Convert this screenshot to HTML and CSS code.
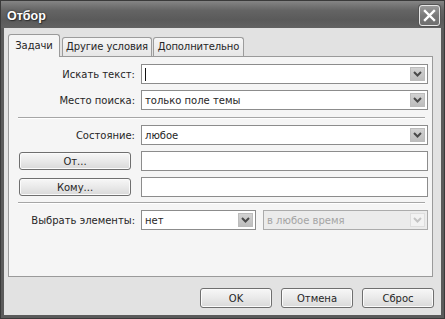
FILE: index.html
```html
<!DOCTYPE html>
<html lang="ru">
<head>
<meta charset="utf-8">
<title>Отбор</title>
<link rel="stylesheet" href="styles.css">
</head>
<body>
<div class="window">
  <div class="titlebar">
    <span class="title">Отбор</span>
    <span class="close"><svg width="13" height="13" viewBox="0 0 13 13"><path d="M2 2 L11 11 M11 2 L2 11" stroke="#fff" stroke-width="2.4" stroke-linecap="square"/></svg></span>
  </div>
  <div class="client">
    <div class="tabs">
      <div class="tab active">Задачи</div>
      <div class="tab t2">Другие условия</div>
      <div class="tab t3">Дополнительно</div>
    </div>
    <div class="panel">
      <div class="row">
        <span class="lbl">Искать текст:</span>
        <div class="combo"><span class="val"><span class="caret"></span></span><span class="drop"><svg width="9" height="6" viewBox="0 0 9 6"><path d="M1 1 L4.5 4.5 L8 1" fill="none" stroke="#4a4a4a" stroke-width="2"/></svg></span></div>
      </div>
      <div class="row">
        <span class="lbl">Место поиска:</span>
        <div class="combo"><span class="val">только поле темы</span><span class="drop"><svg width="9" height="6" viewBox="0 0 9 6"><path d="M1 1 L4.5 4.5 L8 1" fill="none" stroke="#4a4a4a" stroke-width="2"/></svg></span></div>
      </div>
      <div class="sep"></div>
      <div class="row">
        <span class="lbl">Состояние:</span>
        <div class="combo"><span class="val">любое</span><span class="drop"><svg width="9" height="6" viewBox="0 0 9 6"><path d="M1 1 L4.5 4.5 L8 1" fill="none" stroke="#4a4a4a" stroke-width="2"/></svg></span></div>
      </div>
      <div class="row">
        <span class="btn wide">От...</span>
        <div class="field"></div>
      </div>
      <div class="row">
        <span class="btn wide">Кому...</span>
        <div class="field"></div>
      </div>
      <div class="sep sep2"></div>
      <div class="row">
        <span class="lbl">Выбрать элементы:</span>
        <div class="pair">
          <div class="combo short"><span class="val">нет</span><span class="drop"><svg width="9" height="6" viewBox="0 0 9 6"><path d="M1 1 L4.5 4.5 L8 1" fill="none" stroke="#4a4a4a" stroke-width="2"/></svg></span></div>
          <div class="combo disabled"><span class="val">в любое время</span><span class="drop"><svg width="9" height="6" viewBox="0 0 9 6"><path d="M1 1 L4.5 4.5 L8 1" fill="none" stroke="#c4c4c4" stroke-width="2"/></svg></span></div>
        </div>
      </div>
    </div>
    <div class="actions">
      <span class="btn">OK</span>
      <span class="btn">Отмена</span>
      <span class="btn">Сброс</span>
    </div>
  </div>
</div>
</body>
</html>
```

FILE: styles.css
```css
* { box-sizing: border-box; }
html, body { margin: 0; padding: 0; }
body {
  width: 445px;
  height: 319px;
  overflow: hidden;
  font-family: "DejaVu Sans", Verdana, sans-serif;
  font-size: 10px;
  color: #262626;
}
.window {
  width: 445px;
  height: 319px;
  display: flex;
  flex-direction: column;
  background: #5b5b5b;
  border: 1px solid #3a3a3a;
}
.titlebar {
  height: 27px;
  flex: none;
  display: flex;
  align-items: center;
  justify-content: space-between;
  padding: 0 4px 0 6px;
  background: linear-gradient(#858585, #646464 35%, #5a5a5a 70%, #626262);
}
.title {
  color: #fff;
  font-family: "Liberation Sans", Arial, sans-serif;
  font-weight: bold;
  font-size: 12.5px;
  text-shadow: 0 0 2px #222, 1px 1px 1px #333;
  margin-top: 3px;
}
.close {
  width: 21px;
  height: 21px;
  margin-top: 2px;
  border: 1px solid #e6e6e6;
  border-radius: 3px;
  background: linear-gradient(#9a9a9a, #7a7a7a 50%, #6e6e6e);
  display: flex;
  align-items: center;
  justify-content: center;
  box-shadow: 0 0 0 1px #555;
}
.client {
  flex: 1;
  margin: 0 3px 3px 3px;
  background: #e2e2e2;
  display: flex;
  flex-direction: column;
  padding: 6px 8px 7px 4px;
}
.tabs {
  display: flex;
  align-items: flex-end;
  flex: none;
}
.tab {
  height: 19px;
  line-height: 18px;
  text-align: center;
  border: 1px solid #9c9c9c;
  border-bottom: none;
  border-radius: 3px 3px 0 0;
  background: linear-gradient(#f6f6f6, #e6e6e6);
  margin-left: 1px;
  white-space: nowrap;
  letter-spacing: -0.1px;
}
.tab.t2 { width: 90px; margin-left: 2px; }
.tab.t3 { width: 91px; margin-left: 1px; }
.tab.active {
  width: 52px;
  height: 23px;
  margin-left: 0;
  margin-bottom: -1px;
  line-height: 22px;
  background: #f5f5f5;
  position: relative;
  z-index: 1;
  border-color: #9a9a9a;
}
.panel {
  flex: 1;
  border: 1px solid #9a9a9a;
  background: #f5f5f5;
  padding: 7px 4px 0 10px;
  display: flex;
  flex-direction: column;
  gap: 6px;
}
.row {
  display: grid;
  grid-template-columns: 116px 1fr;
  column-gap: 6px;
  height: 20px;
  align-items: center;
}
.lbl {
  text-align: right;
  white-space: nowrap;
}
.combo, .field {
  height: 20px;
  border: 1px solid #8c8c8c;
  background: #fff;
  display: flex;
  align-items: center;
}
.combo .val {
  flex: 1;
  padding-left: 3px;
  white-space: nowrap;
  display: flex;
  align-items: center;
}
.caret {
  width: 1px;
  height: 13px;
  background: #111;
}
.drop {
  width: 15px;
  height: 14px;
  margin-right: 2px;
  background: linear-gradient(#d2d2d2, #bdbdbd);
  border: 1px solid #bcbcbc;
  display: flex;
  align-items: center;
  justify-content: center;
}
.sep {
  height: 2px;
  border-top: 1px solid #a6a6a6;
  border-bottom: 1px solid #fff;
  margin: 1px 3px 0 -1px;
}
.sep2 { margin-top: -1px; }
.pair {
  display: flex;
  gap: 7px;
}
.combo.short { width: 115px; flex: none; }
.combo.disabled {
  flex: 1;
  background: #ebebeb;
  border-color: #ababab;
  color: #a4a4a4;
}
.combo.disabled .drop {
  background: #f2f2f2;
  border-color: #dedede;
}
.btn {
  height: 19px;
  border: 1px solid #6f6f6f;
  border-radius: 3px;
  background: linear-gradient(#f7f7f7, #e9e9e9 50%, #d9d9d9);
  display: flex;
  align-items: center;
  justify-content: center;
  box-shadow: inset 0 0 0 1px #fbfbfb;
}
.btn.wide { width: 112px; height: 18px; }
.actions {
  flex: none;
  display: flex;
  justify-content: flex-end;
  gap: 9px;
  margin: 11px -1px 0 0;
}
.actions .btn { width: 72px; height: 20px; }
```
